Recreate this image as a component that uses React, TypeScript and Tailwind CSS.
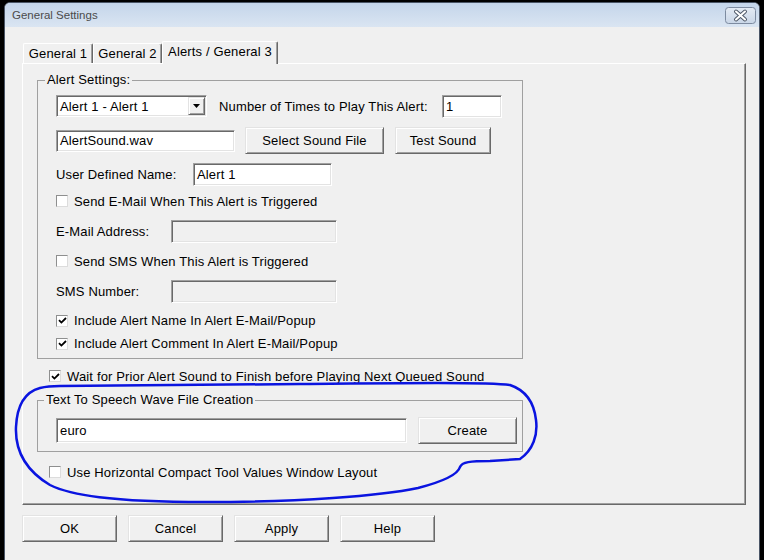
import React from "react";

const sunken =
  "border border-t-[#a0a0a0] border-l-[#a0a0a0] border-b-white border-r-white shadow-[inset_1px_1px_0_#696969,inset_-1px_-1px_0_#e3e3e3]";
const raised =
  "border border-t-[#e3e3e3] border-l-[#e3e3e3] border-b-[#696969] border-r-[#696969] shadow-[inset_1px_1px_0_#fff,inset_-1px_-1px_0_#a0a0a0] bg-[#f0f0f0]";

const Btn: React.FC<{ className?: string; children: React.ReactNode }> = ({ className = "", children }) => (
  <button className={`flex items-center justify-center text-black ${raised} ${className}`}>{children}</button>
);

const Field: React.FC<{ className?: string; value?: string; disabled?: boolean }> = ({
  className = "",
  value = "",
  disabled = false,
}) => (
  <div className={`flex items-center pl-[3px] ${disabled ? "bg-[#f0f0f0]" : "bg-white"} ${sunken} ${className}`}>
    {value}
  </div>
);

const Check: React.FC<{ checked?: boolean; label: string; className?: string }> = ({
  checked = false,
  label,
  className = "",
}) => (
  <div className={`flex items-center ${className}`}>
    <span className="flex h-[12px] w-[12px] items-center justify-center border border-t-[#8e8f8f] border-l-[#8e8f8f] border-b-[#dcdcdc] border-r-[#dcdcdc] bg-white">
      {checked && (
        <svg width="9" height="9" viewBox="0 0 9 9">
          <path d="M1 4.2 L3.4 6.6 L8 2" fill="none" stroke="#000" strokeWidth="1.8" />
        </svg>
      )}
    </span>
    <span className="ml-[6px]">{label}</span>
  </div>
);

const CloseBtn = () => (
  <svg width="31" height="17" viewBox="0 0 31 17">
    <defs>
      <linearGradient id="cb" x1="0" y1="0" x2="0" y2="1">
        <stop offset="0" stopColor="#e4ebf4" />
        <stop offset="1" stopColor="#c9d6e7" />
      </linearGradient>
    </defs>
    <rect x="0.5" y="0.5" width="30" height="16" rx="3" fill="url(#cb)" stroke="#7d8ba0" />
    <path d="M11 4.5 L20 12.5 M20 4.5 L11 12.5" stroke="#4f5968" strokeWidth="4" strokeLinecap="round" />
    <path d="M11 4.5 L20 12.5 M20 4.5 L11 12.5" stroke="#fff" strokeWidth="2" strokeLinecap="round" />
  </svg>
);

const Tab: React.FC<{ label: string; width: string; active?: boolean }> = ({ label, width, active = false }) => (
  <div
    className={`flex items-center justify-center rounded-t-[2px] border-l border-t border-r border-l-white border-t-white border-r-[#696969] bg-[#f0f0f0] shadow-[inset_-1px_0_0_#a0a0a0] ${width} ${
      active ? "relative z-10 -mb-px h-[23px] pb-[3px]" : "h-[20px]"
    }`}
  >
    {label}
  </div>
);

export default function App() {
  return (
    <div className="relative h-[560px] w-[764px] overflow-hidden bg-black font-['Liberation_Sans',Arial,sans-serif] text-[13px] leading-[15px] tracking-[0.15px] text-black">
      <div className="ml-[4px] mt-[2px] flex h-[570px] w-[756px] flex-col rounded-t-[6px] border border-[#4a5566] bg-[#f0f0f0]">
        <div className="flex h-[24px] items-center justify-between rounded-t-[5px] bg-gradient-to-b from-[#c4d5ea] to-[#dae5f2] pl-[7px] pr-[3px]">
          <span className="text-[11.5px] tracking-normal text-[#4b4b4b]">General Settings</span>
          <CloseBtn />
        </div>

        <div className="ml-[18px] mt-[14px] flex items-end">
          <Tab label="General 1" width="w-[70px]" />
          <Tab label="General 2" width="w-[69px]" />
          <Tab label="Alerts / General 3" width="w-[116px]" active />
        </div>

        <div className="ml-[17px] flex h-[442px] w-[724px] flex-col border border-l-white border-t-white border-b-[#696969] border-r-[#696969] shadow-[inset_-1px_-1px_0_#a0a0a0]">
          <fieldset className="ml-[14px] mt-[8px] w-[486px] border border-[#a0a0a0]">
            <legend className="ml-[7px] px-[2px] leading-[16px]">Alert Settings:</legend>
            <div className="pb-[3px] pl-[18px] pt-[7px]">
              <div className="flex h-[22px] items-center">
                <div className={`flex h-[22px] w-[151px] items-center bg-white pl-[3px] pr-[1px] ${sunken}`}>
                  <span className="flex-1">Alert 1 - Alert 1</span>
                  <span className={`flex h-[18px] w-[17px] items-center justify-center ${raised}`}>
                    <svg width="7" height="4" viewBox="0 0 7 4">
                      <path d="M0 0 H7 L3.5 4 Z" fill="#000" />
                    </svg>
                  </span>
                </div>
                <span className="ml-[12px] w-[223px]">Number of Times to Play This Alert:</span>
                <Field className="h-[23px] w-[60px]" value="1" />
              </div>
              <div className="mt-[10px] flex h-[27px] items-center">
                <Field className="h-[22px] w-[179px]" value="AlertSound.wav" />
                <Btn className="ml-[10px] h-[27px] w-[139px]">Select Sound File</Btn>
                <Btn className="ml-[11px] h-[27px] w-[96px]">Test Sound</Btn>
              </div>
              <div className="mt-[9px] flex h-[23px] items-center">
                <span className="w-[137px]">User Defined Name:</span>
                <Field className="h-[23px] w-[139px]" value="Alert 1" />
              </div>
              <Check className="mt-[3px] h-[24px]" label="Send E-Mail When This Alert is Triggered" />
              <div className="mt-[6px] flex h-[24px] items-center">
                <span className="w-[115px]">E-Mail Address:</span>
                <Field className="h-[23px] w-[166px]" disabled />
              </div>
              <Check className="mt-[6px] h-[24px]" label="Send SMS When This Alert is Triggered" />
              <div className="mt-[6px] flex h-[24px] items-center">
                <span className="w-[115px]">SMS Number:</span>
                <Field className="h-[23px] w-[166px]" disabled />
              </div>
              <Check className="mt-[6px] h-[23px]" checked label="Include Alert Name In Alert E-Mail/Popup" />
              <Check className="h-[23px]" checked label="Include Alert Comment In Alert E-Mail/Popup" />
            </div>
          </fieldset>

          <Check
            className="ml-[26px] mt-[7px] h-[20px]"
            checked
            label="Wait for Prior Alert Sound to Finish before Playing Next Queued Sound"
          />

          <fieldset className="ml-[14px] mt-[6px] w-[486px] border border-[#a0a0a0]">
            <legend className="ml-[6px] px-[2px] leading-[16px]">Text To Speech Wave File Creation</legend>
            <div className="flex h-[43px] items-start pb-[7px] pl-[18px] pt-[9px]">
              <Field className="mt-px h-[25px] w-[351px]" value="euro" />
              <Btn className="ml-[11px] h-[27px] w-[99px]">Create</Btn>
            </div>
          </fieldset>

          <Check className="ml-[26px] mt-[10px] h-[20px]" label="Use Horizontal Compact Tool Values Window Layout" />
        </div>

        <div className="ml-[17px] mt-[10px] flex gap-[11px]">
          <Btn className="h-[27px] w-[95px]">OK</Btn>
          <Btn className="h-[27px] w-[95px]">Cancel</Btn>
          <Btn className="h-[27px] w-[95px]">Apply</Btn>
          <Btn className="h-[27px] w-[95px]">Help</Btn>
        </div>
      </div>

      <svg className="pointer-events-none absolute left-0 top-0" width="764" height="560" viewBox="0 0 764 560">
        <path
          d="M40 388 C25 392 17 405 16 427 C15 450 25 470 50 485 C70 495 110 502 205 502 C300 502 380 496 418 488 C445 481 458 474 460 467 C462 462 470 461 490 461 L520 459 C533 450 538 435 536 420 C534 402 525 390 510 385 C490 382 400 383 300 384 L60 386 C50 386 44 387 40 388 Z"
          fill="none"
          stroke="#0a14e0"
          strokeWidth="2.5"
        />
      </svg>
    </div>
  );
}
